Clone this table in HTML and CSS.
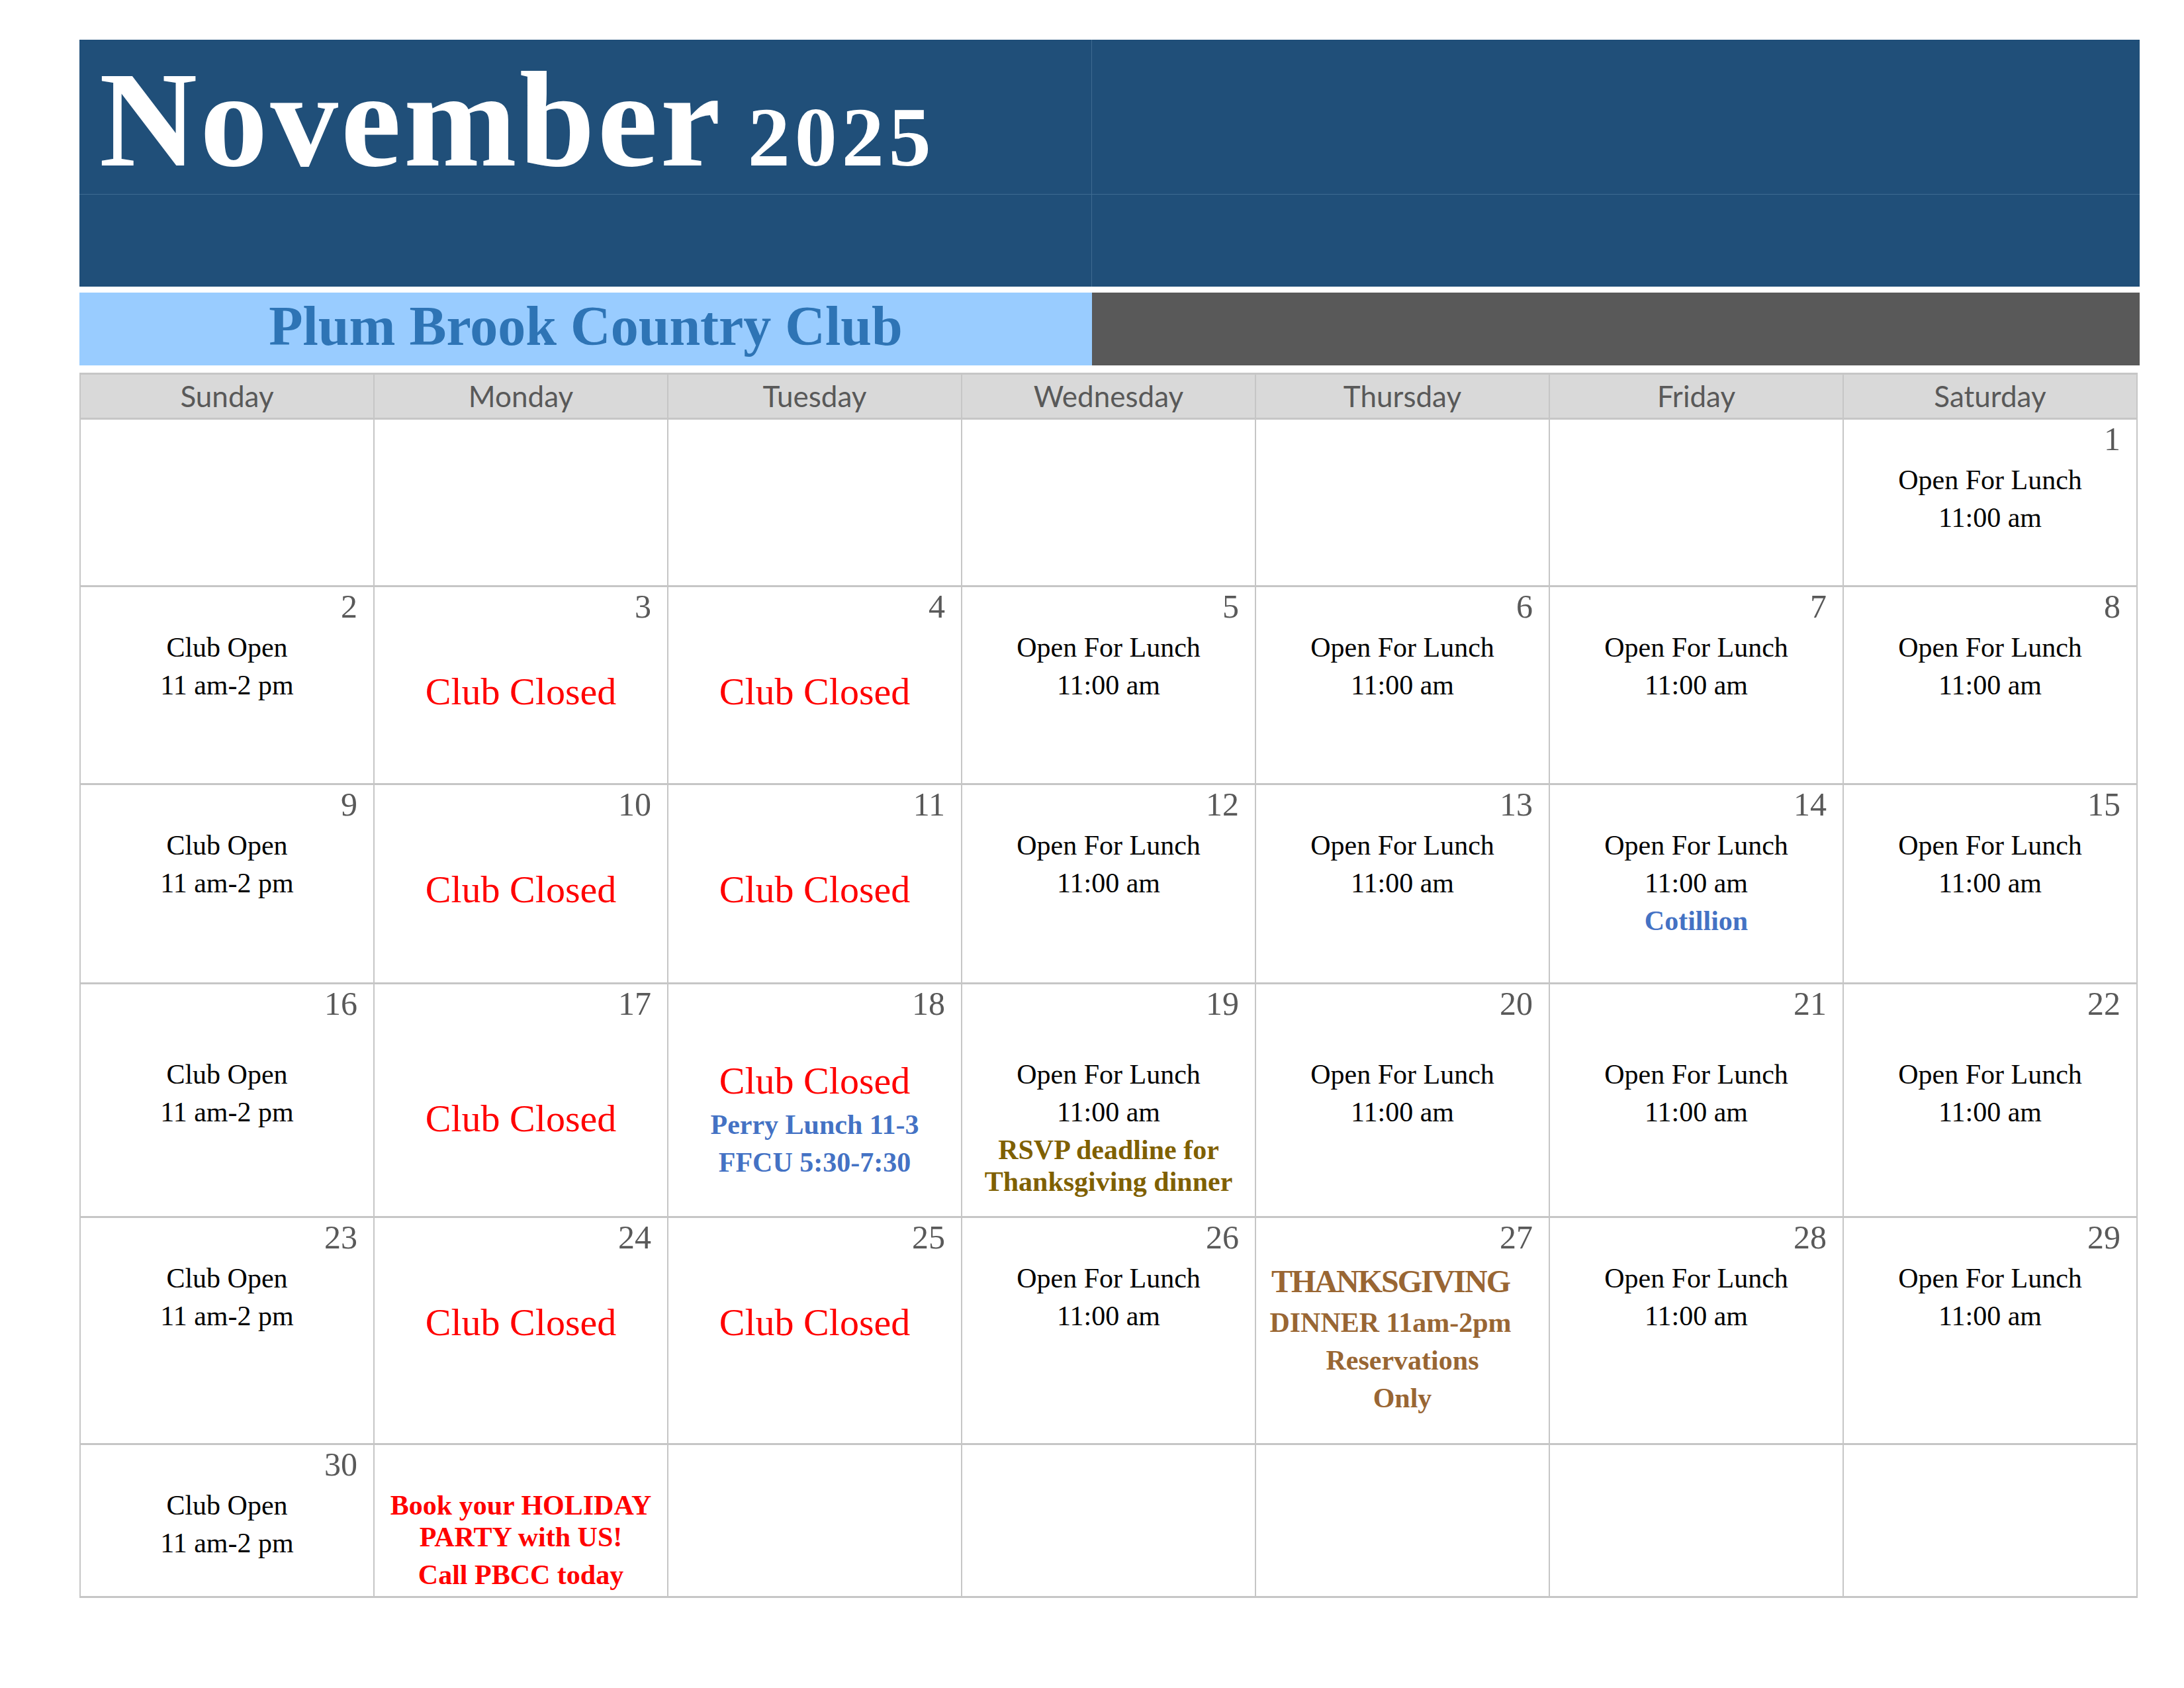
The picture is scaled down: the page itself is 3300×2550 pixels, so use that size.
FILE: index.html
```html
<!DOCTYPE html>
<html lang="en">
<head>
<meta charset="utf-8">
<title>November 2025 - Plum Brook Country Club</title>
<link rel="stylesheet" href="styles.css">
</head>
<body>
<div class="page">
  <header class="banner">
    <div class="banner-cell title-cell"><span class="month">November</span><span class="year">2025</span></div>
    <div class="banner-cell b-tr"></div>
    <div class="banner-cell b-bl"></div>
    <div class="banner-cell b-br"></div>
  </header>

  <div class="club-band">
    <div class="club-name">Plum Brook Country Club</div>
    <div class="club-fill"></div>
  </div>

  <div class="calendar">
    <div class="dow">Sunday</div>
    <div class="dow">Monday</div>
    <div class="dow">Tuesday</div>
    <div class="dow">Wednesday</div>
    <div class="dow">Thursday</div>
    <div class="dow">Friday</div>
    <div class="dow">Saturday</div>

    <!-- Week 1 -->
    <div class="cell"></div>
    <div class="cell"></div>
    <div class="cell"></div>
    <div class="cell"></div>
    <div class="cell"></div>
    <div class="cell"></div>
    <div class="cell"><div class="num">1</div><div class="events"><div class="p">Open For Lunch</div><div class="p">11:00 am</div></div></div>

    <!-- Week 2 -->
    <div class="cell"><div class="num">2</div><div class="events"><div class="p">Club Open</div><div class="p">11 am-2 pm</div></div></div>
    <div class="cell"><div class="num">3</div><div class="events"><div class="p empty">&nbsp;</div><div class="p closed">Club Closed</div></div></div>
    <div class="cell"><div class="num">4</div><div class="events"><div class="p empty">&nbsp;</div><div class="p closed">Club Closed</div></div></div>
    <div class="cell"><div class="num">5</div><div class="events"><div class="p">Open For Lunch</div><div class="p">11:00 am</div></div></div>
    <div class="cell"><div class="num">6</div><div class="events"><div class="p">Open For Lunch</div><div class="p">11:00 am</div></div></div>
    <div class="cell"><div class="num">7</div><div class="events"><div class="p">Open For Lunch</div><div class="p">11:00 am</div></div></div>
    <div class="cell"><div class="num">8</div><div class="events"><div class="p">Open For Lunch</div><div class="p">11:00 am</div></div></div>

    <!-- Week 3 -->
    <div class="cell"><div class="num">9</div><div class="events"><div class="p">Club Open</div><div class="p">11 am-2 pm</div></div></div>
    <div class="cell"><div class="num">10</div><div class="events"><div class="p empty">&nbsp;</div><div class="p closed">Club Closed</div></div></div>
    <div class="cell"><div class="num">11</div><div class="events"><div class="p empty">&nbsp;</div><div class="p closed">Club Closed</div></div></div>
    <div class="cell"><div class="num">12</div><div class="events"><div class="p">Open For Lunch</div><div class="p">11:00 am</div></div></div>
    <div class="cell"><div class="num">13</div><div class="events"><div class="p">Open For Lunch</div><div class="p">11:00 am</div></div></div>
    <div class="cell"><div class="num">14</div><div class="events"><div class="p">Open For Lunch</div><div class="p">11:00 am</div><div class="p bold blue">Cotillion</div></div></div>
    <div class="cell"><div class="num">15</div><div class="events"><div class="p">Open For Lunch</div><div class="p">11:00 am</div></div></div>

    <!-- Week 4 -->
    <div class="cell tall"><div class="num">16</div><div class="events"><div class="p">Club Open</div><div class="p">11 am-2 pm</div></div></div>
    <div class="cell tall"><div class="num">17</div><div class="events"><div class="p empty">&nbsp;</div><div class="p closed">Club Closed</div></div></div>
    <div class="cell tall"><div class="num">18</div><div class="events"><div class="p closed">Club Closed</div><div class="p bold blue">Perry Lunch 11-3</div><div class="p bold blue">FFCU 5:30-7:30</div></div></div>
    <div class="cell tall"><div class="num">19</div><div class="events"><div class="p">Open For Lunch</div><div class="p">11:00 am</div><div class="p bold olive"><span class="ln">RSVP deadline for</span><span class="ln">Thanksgiving dinner</span></div></div></div>
    <div class="cell tall"><div class="num">20</div><div class="events"><div class="p">Open For Lunch</div><div class="p">11:00 am</div></div></div>
    <div class="cell tall"><div class="num">21</div><div class="events"><div class="p">Open For Lunch</div><div class="p">11:00 am</div></div></div>
    <div class="cell tall"><div class="num">22</div><div class="events"><div class="p">Open For Lunch</div><div class="p">11:00 am</div></div></div>

    <!-- Week 5 -->
    <div class="cell"><div class="num">23</div><div class="events"><div class="p">Club Open</div><div class="p">11 am-2 pm</div></div></div>
    <div class="cell"><div class="num">24</div><div class="events"><div class="p empty">&nbsp;</div><div class="p closed">Club Closed</div></div></div>
    <div class="cell"><div class="num">25</div><div class="events"><div class="p empty">&nbsp;</div><div class="p closed">Club Closed</div></div></div>
    <div class="cell"><div class="num">26</div><div class="events"><div class="p">Open For Lunch</div><div class="p">11:00 am</div></div></div>
    <div class="cell"><div class="num">27</div><div class="events"><div class="p bold brown big shift">THANKSGIVING</div><div class="p bold brown shift">DINNER 11am-2pm</div><div class="p bold brown">Reservations</div><div class="p bold brown">Only</div></div></div>
    <div class="cell"><div class="num">28</div><div class="events"><div class="p">Open For Lunch</div><div class="p">11:00 am</div></div></div>
    <div class="cell"><div class="num">29</div><div class="events"><div class="p">Open For Lunch</div><div class="p">11:00 am</div></div></div>

    <!-- Week 6 -->
    <div class="cell"><div class="num">30</div><div class="events"><div class="p">Club Open</div><div class="p">11 am-2 pm</div></div></div>
    <div class="cell"><div class="events offset"><div class="p bold red"><span class="ln">Book your HOLIDAY</span><span class="ln">PARTY with US!</span></div><div class="p bold red">Call PBCC today</div></div></div>
    <div class="cell"></div>
    <div class="cell"></div>
    <div class="cell"></div>
    <div class="cell"></div>
    <div class="cell"></div>
  </div>
</div>
</body>
</html>
```

FILE: styles.css
```css
* { box-sizing: border-box; }

html, body {
  margin: 0;
  padding: 0;
  background: #ffffff;
}

body {
  font-family: "Liberation Serif", "Times New Roman", serif;
  color: #000000;
}

.page {
  padding: 60px 0 0 120px;
  width: 3300px;
}

/* ---------- Banner ---------- */
.banner {
  width: 3113px;
  display: grid;
  grid-template-columns: 1530px 1583px;
  grid-template-rows: 234px 139px;
  background: #204f79;
}

.banner-cell {
  border-color: rgba(120, 160, 195, 0.35);
  border-style: solid;
  border-width: 0;
}

.title-cell {
  border-right-width: 1px;
  border-bottom-width: 1px;
  padding: 18px 0 0 30px;
  font-family: "Liberation Serif", "Times New Roman", serif;
  font-weight: bold;
  color: #ffffff;
  font-size: 205px;
  line-height: 205px;
  white-space: nowrap;
}

.b-tr { border-bottom-width: 1px; }
.b-bl { border-right-width: 1px; }

.month {
  font-size: 205px;
  line-height: 1;
  letter-spacing: 4px;
}

.year {
  font-size: 128px;
  line-height: 1;
  letter-spacing: 7px;
  margin-left: 37px;
}

/* ---------- Club band ---------- */
.club-band {
  margin-top: 9px;
  width: 3113px;
  height: 110px;
  display: flex;
}

.club-name {
  width: 1530px;
  height: 110px;
  background: #99ccff;
  color: #2e74b5;
  font-family: "Liberation Serif", "Times New Roman", serif;
  font-weight: bold;
  font-size: 84px;
  line-height: 102px;
  text-align: center;
  white-space: nowrap;
}

.club-fill {
  flex: 1;
  background: #595959;
}

/* ---------- Calendar grid ---------- */
.calendar {
  margin-top: 11px;
  display: grid;
  grid-template-columns: repeat(7, 442px);
  grid-template-rows: 65px 250px 296px 298px 350px 340px 228px;
  gap: 3px 2px;
  padding: 3px 2px;
  width: max-content;
  background: #c6c6c6;
}

.dow {
  background: #d9d9d9;
  color: #595959;
  font-family: Lato, "DejaVu Sans", sans-serif;
  font-size: 44px;
  line-height: 65px;
  text-align: center;
}

.cell {
  background: #ffffff;
  display: flex;
  flex-direction: column;
}

.num {
  height: 54px;
  padding: 4px 24px 0 0;
  text-align: right;
  font-size: 50px;
  line-height: 50px;
  color: #595959;
}

.events {
  margin-top: 4px;
  padding: 0 6px;
  text-align: center;
}

.events.offset {
  margin-top: 58px;
}

.tall .events {
  padding-top: 45px;
}

.p {
  margin-top: 9px;
  font-size: 42px;
  line-height: 48px;
  white-space: nowrap;
}

.p.empty {
  height: 48px;
}

.p.closed {
  font-size: 58px;
  line-height: 67px;
  color: #ff0000;
}

.ln {
  display: block;
}

.bold { font-weight: bold; }
.blue { color: #4472c4; }
.olive { color: #7f6000; }
.brown { color: #996633; }
.red { color: #ff0000; }

.p.big {
  font-size: 48px;
  line-height: 58px;
  letter-spacing: -2px;
}

.p.shift {
  padding-right: 36px;
}
```
